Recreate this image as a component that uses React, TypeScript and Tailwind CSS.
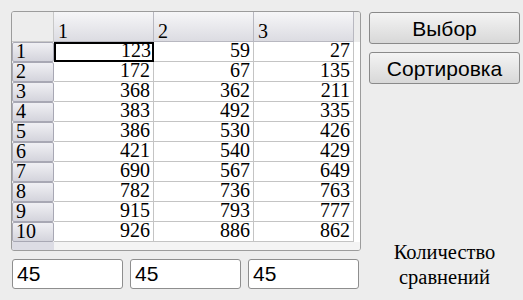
import React from 'react';

const rows: number[][] = [
  [123, 59, 27],
  [172, 67, 135],
  [368, 362, 211],
  [383, 492, 335],
  [386, 530, 426],
  [421, 540, 429],
  [690, 567, 649],
  [782, 736, 763],
  [915, 793, 777],
  [926, 886, 862],
];

const serif = "font-['Liberation_Serif',serif]";
const sans = "font-['Liberation_Sans',Arial,sans-serif]";

export default function App() {
  return (
    <div className={`w-[523px] h-[300px] bg-[#ededed] overflow-hidden flex gap-[8px] pl-[11px] pt-[11px] ${sans}`}>
      {/* left side: grid + fields */}
      <div className="flex flex-col gap-[8px]">
        <div className="w-[350px] h-[240px] border border-[#9c9c9c] rounded-[3px] bg-[#f4f4f4] overflow-hidden">
          {/* header */}
          <div className={`flex h-[30px] ${serif} text-[20px] leading-none`}>
            <div className="w-[42px] bg-[#ededed] border-r border-b border-[#c8c8c8]" />
            {['1', '2', '3'].map((h) => (
              <div
                key={h}
                className="w-[100px] pl-[4px] pt-[9px] bg-gradient-to-b from-[#f6f6f8] to-[#dcdce2] border-r border-b border-[#b8b8c0] text-black"
              >
                {h}
              </div>
            ))}
            <div className="flex-1 bg-[#ececec]" />
          </div>
          {rows.map((r, i) => (
            <div key={i} className={`flex h-[20px] ${serif} text-[20px] leading-none`}>
              <div className="w-[42px] pl-[3px] pb-[0px] flex items-end bg-gradient-to-b from-[#f0f0f4] to-[#d4d4dc] border border-[#a8a8b4] rounded-[2px] text-black">
                {i + 1}
              </div>
              {r.map((v, j) => (
                <div
                  key={j}
                  className={
                    i === 0 && j === 0
                      ? 'w-[100px] bg-white border-2 border-black flex items-end justify-end pr-[1px] text-black'
                      : 'w-[100px] bg-white border-r border-b border-[#c4c4c4] flex items-end justify-end pr-[3px] pb-[1px] text-black'
                  }
                >
                  {v}
                </div>
              ))}
              <div className="flex-1 bg-white" />
            </div>
          ))}
          <div className="flex h-[10px]">
            <div className="w-[42px] bg-[#dcdce4]" />
            <div className="flex-1 bg-[#f4f4f4]" />
          </div>
        </div>
        <div className="flex gap-[7px] pl-[1px]">
          {[0, 1, 2].map((k) => (
            <div
              key={k}
              className="w-[111px] h-[30px] bg-white border border-[#8e8e8e] rounded-[3px] pl-[4px] flex items-center text-[21px] text-black"
            >
              45
            </div>
          ))}
        </div>
      </div>

      {/* right side: buttons + label */}
      <div className="flex flex-col w-[151px]">
        <button className="h-[32px] mt-[1px] border border-[#8a8a8a] rounded-[3px] bg-gradient-to-b from-[#f4f4f4] to-[#d8d8d8] text-[21px] text-black">
          Выбор
        </button>
        <button className="h-[32px] mt-[8px] border border-[#8a8a8a] rounded-[3px] bg-gradient-to-b from-[#f4f4f4] to-[#d8d8d8] text-[21px] text-black">
          Сортировка
        </button>
        <div className={`mt-auto mb-[10px] text-center ${serif} text-[20.5px] leading-[25px] text-black`}>
          Количество
          <br />
          сравнений
        </div>
      </div>
    </div>
  );
}
